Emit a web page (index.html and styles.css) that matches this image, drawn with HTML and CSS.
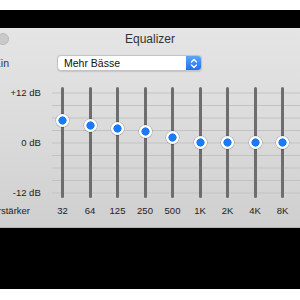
FILE: index.html
```html
<!DOCTYPE html>
<html lang="de">
<head>
    <meta charset="UTF-8">
    <meta name="viewport" content="width=device-width, initial-scale=1.0">
    <title>Equalizer</title>
    <link rel="stylesheet" href="styles.css">
</head>
<body>
    <div class="band-top"></div>

    <div class="window">
        <div class="titlebar">
            <span class="light"></span>
            <span class="title">Equalizer</span>
            <span></span>
        </div>

        <div class="controls">
            <label class="on-label">Ein</label>
            <div class="popup">
                <span class="popup-text">Mehr Bässe</span>
                <span class="popup-arrows">
                    <svg width="8" height="11" viewBox="0 0 8 11">
                        <path d="M1.5 4 L4 1.5 L6.5 4" fill="none" stroke="#fff" stroke-width="1.3" stroke-linecap="round" stroke-linejoin="round"/>
                        <path d="M1.5 7 L4 9.5 L6.5 7" fill="none" stroke="#fff" stroke-width="1.3" stroke-linecap="round" stroke-linejoin="round"/>
                    </svg>
                </span>
            </div>
        </div>

        <div class="eq">
            <div class="scale">
                <span>+12 dB</span>
                <span>0 dB</span>
                <span>-12 dB</span>
            </div>
            <div class="bands">
                <div class="band"><span class="track"></span><span class="knob" style="top: 27px"></span></div>
                <div class="band"><span class="track"></span><span class="knob" style="top: 32.5px"></span></div>
                <div class="band"><span class="track"></span><span class="knob" style="top: 35.5px"></span></div>
                <div class="band"><span class="track"></span><span class="knob" style="top: 38.5px"></span></div>
                <div class="band"><span class="track"></span><span class="knob" style="top: 44px"></span></div>
                <div class="band"><span class="track"></span><span class="knob" style="top: 49.5px"></span></div>
                <div class="band"><span class="track"></span><span class="knob" style="top: 49.5px"></span></div>
                <div class="band"><span class="track"></span><span class="knob" style="top: 49.5px"></span></div>
                <div class="band"><span class="track"></span><span class="knob" style="top: 49.5px"></span></div>
            </div>
        </div>

        <div class="freqs">
            <span class="amp">Verstärker</span>
            <span class="freq">32</span>
            <span class="freq">64</span>
            <span class="freq">125</span>
            <span class="freq">250</span>
            <span class="freq">500</span>
            <span class="freq">1K</span>
            <span class="freq">2K</span>
            <span class="freq">4K</span>
            <span class="freq">8K</span>
        </div>
    </div>

    <div class="band-bottom"></div>
</body>
</html>
```

FILE: styles.css
```css
/* General styles */
body {
    margin: 0;
    background: #fff;
    font-family: "Liberation Sans", Arial, sans-serif;
    overflow: hidden;
}

.band-top {
    margin-top: 10px;
    height: 18px;
    background: #000;
}

.band-bottom {
    height: 61px;
    background: #000;
}

/* Window */
.window {
    height: 199px;
    border-bottom: 1px solid #b4b4b4;
    background: linear-gradient(to bottom, #e5e5e5, #d9d9d9 60%, #cfcfcf);
    color: #222;
}

.titlebar {
    display: grid;
    grid-template-columns: 1fr auto 1fr;
    align-items: center;
    height: 22px;
}

.light {
    width: 10px;
    height: 10px;
    margin-left: -3px;
    border-radius: 50%;
    background: #cacaca;
    border: 0.5px solid #b9b9b9;
}

.title {
    font-size: 12px;
    color: #333;
}

/* Preset row */
.controls {
    display: flex;
    align-items: center;
    margin-top: 5px;
    height: 16px;
}

.on-label {
    display: flex;
    justify-content: flex-end;
    width: 9px;
    margin-right: 48px;
    font-size: 10.5px;
    color: #25316a;
    white-space: nowrap;
}

.popup {
    display: flex;
    width: 145px;
    height: 16px;
    box-sizing: border-box;
    border: 1px solid #c3c3c3;
    border-radius: 4px;
    background: #fff;
    box-shadow: 0 0.5px 1px rgba(0, 0, 0, 0.12);
    overflow: hidden;
}

.popup-text {
    flex: 1;
    padding-left: 6px;
    font-size: 10.5px;
    line-height: 14px;
    color: #111;
}

.popup-arrows {
    display: flex;
    align-items: center;
    justify-content: center;
    width: 15px;
    background: linear-gradient(to bottom, #5ea5fb, #1d72ef);
}

/* Equalizer */
.eq {
    display: flex;
    margin-top: 15.5px;
    height: 111.5px;
}

.scale {
    display: flex;
    flex-direction: column;
    justify-content: space-between;
    align-items: flex-end;
    width: 48.75px;
    box-sizing: border-box;
    padding-right: 8px;
    font-size: 9.5px;
    line-height: 11px;
    color: #222;
}

.bands {
    display: flex;
    flex: 1;
    background-image: linear-gradient(to bottom, #c2c2c2 1px, transparent 1px);
    background-size: 100% 12.5px;
    background-position: 3px 5.5px;
    background-repeat: repeat-y;
}

.band {
    position: relative;
    display: flex;
    justify-content: center;
    width: 27.5px;
}

.track {
    width: 3px;
    margin-top: 0.5px;
    border-radius: 1.5px;
    background: #6d6d6d;
}

.knob {
    position: absolute;
    left: 7.25px;
    width: 13px;
    height: 13px;
    box-sizing: border-box;
    border-radius: 50%;
    background: radial-gradient(circle, #1b7af7 0, #1b7af7 3.6px, #2a82f4 3.9px, #fff 4.3px);
    box-shadow: 0 0 0 0.5px rgba(0, 0, 0, 0.22), 0 0.5px 1px rgba(0, 0, 0, 0.25);
}

.freqs {
    display: flex;
    margin-top: 7px;
    font-size: 9.5px;
    line-height: 11px;
    color: #222;
}

.amp {
    display: flex;
    justify-content: flex-end;
    width: 30px;
    margin-right: 18.75px;
    white-space: nowrap;
}

.freq {
    width: 27.5px;
    text-align: center;
}
```
